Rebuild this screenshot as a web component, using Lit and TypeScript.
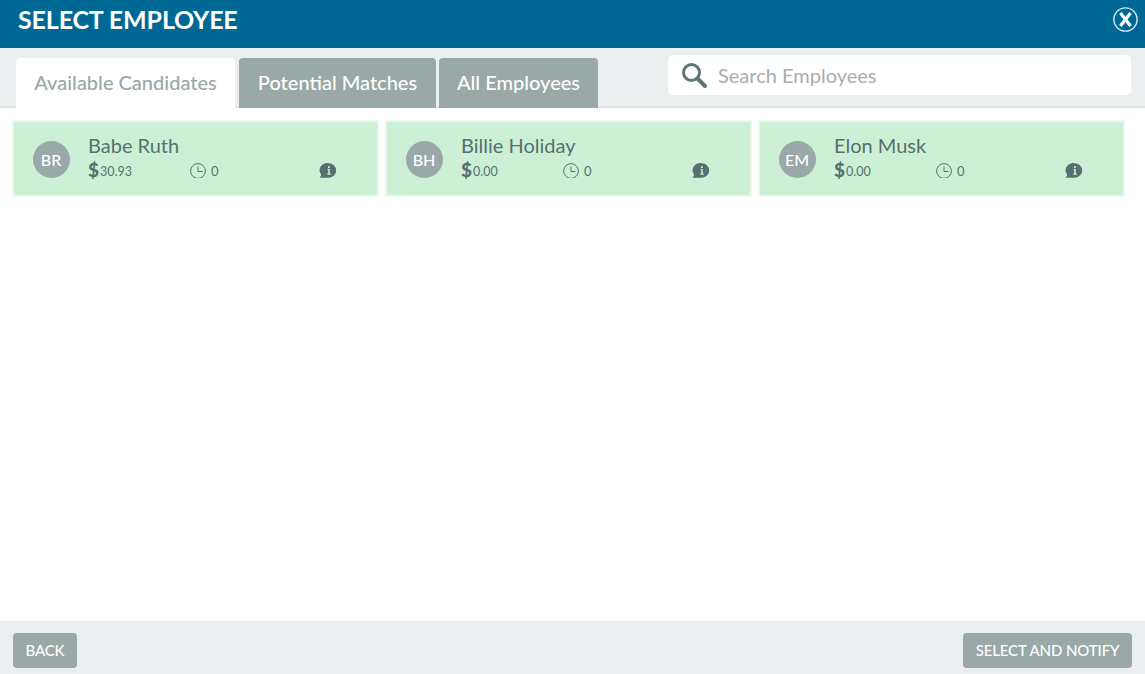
import { LitElement, html, css, svg } from "lit";
import { customElement } from "lit/decorators.js";

const people = [
  { i: "BR", n: "Babe Ruth", p: "30.93" },
  { i: "BH", n: "Billie Holiday", p: "0.00" },
  { i: "EM", n: "Elon Musk", p: "0.00" },
];

@customElement("app-root")
export class AppRoot extends LitElement {
  static styles = css`
    :host { display: flex; flex-direction: column; width: 1145px; height: 674px; overflow: hidden; background: #fff; font-family: Lato, "Open Sans", sans-serif; color: #56706f; }
    .head { height: 48px; flex: none; background: #006894; display: flex; align-items: center; justify-content: space-between; padding: 0 7px 0 18px; box-sizing: border-box; }
    h1 { margin: 0 0 10px; font-size: 25px; line-height: 30px; font-weight: 700; color: #fff; letter-spacing: -0.15px; }
    .close { width: 25px; height: 25px; display: block; margin-bottom: 9px; }
    .tabs { height: 60px; flex: none; box-sizing: border-box; background: #ebeff0; border-bottom: 2px solid #dfe3e4; display: flex; align-items: flex-start; padding-left: 16px; }
    .tab { height: 50px; margin-top: 10px; margin-right: 3px; box-sizing: border-box; border-radius: 4px 4px 0 0; background: #9aa8a7; color: #fff; font-size: 20px; font-weight: 500; display: flex; align-items: center; justify-content: center; padding-bottom: 2px; }
    .tab.on { background: #fff; color: #9aa8a7; position: relative; height: 51px; padding-bottom: 4px; margin-right: 4px; }
    .t1 { width: 219px; } .t2 { width: 197px; } .t3 { width: 159px; }
    .search { width: 463px; height: 40px; margin: 7px 14px 0 auto; background: #fff; border-radius: 5px; display: flex; align-items: center; box-sizing: border-box; padding-left: 13px; gap: 11px; color: #a5aeae; font-size: 20px; }
    .search svg { width: 26px; height: 26px; }
    .body { flex: 1; padding: 12px 20px 0 12px; display: grid; grid-template-columns: repeat(3, 367px); gap: 6px; align-content: start; }
    .card { height: 77px; box-sizing: border-box; background: #ccf0d5; border: 2px solid #edf6f0; display: flex; padding: 19px 0 0 18.5px; }
    .av { width: 37px; height: 37px; border-radius: 50%; background: #9aa8a7; color: #fff; font-size: 16px; font-weight: 500; display: flex; align-items: center; justify-content: center; flex: none; }
    .info { margin-left: 18.5px; margin-top: -8px; }
    .name { font-size: 20px; line-height: 24px; color: #56706f; }
    .meta { display: flex; align-items: center; height: 20px; margin-top: 3px; font-size: 13px; }
    .m1 { width: 102px; display: flex; align-items: center; gap: 1px; }
    .price { font-size: 12.5px; margin-top: 2px; }
    .d { font-size: 19px; font-weight: 900; line-height: 20px; }
    .m2 { width: 129px; display: flex; align-items: center; gap: 5px; }
    .m2 svg { width: 16px; height: 15px; display: block; }
    .m2 span { margin-top: 2px; }
    .bub { width: 18px; height: 15px; display: block; }
    .foot { height: 53px; flex: none; box-sizing: border-box; background: #ebeff0; display: flex; justify-content: space-between; padding: 12px 13px 0 13px; }
    .btn { height: 35px; box-sizing: border-box; border-radius: 4px; background: #9aa8a7; color: #fff; font-size: 15px; font-weight: 500; letter-spacing: -0.12px; display: flex; align-items: center; justify-content: center; padding-bottom: 2px; }
    .back { width: 64px; } .sel { width: 169px; }
  `;

  render() {
    return html`
      <div class="head">
        <h1>SELECT EMPLOYEE</h1>
        <svg class="close" viewBox="0 0 25 25" fill="none">
          <circle cx="12.5" cy="12.5" r="11.6" stroke="#dbe8ee" stroke-width="1.4"/>
          <path d="M7.4 6 L17.6 19 M17.6 6 L7.4 19" stroke="#fff" stroke-width="3.2"/>
        </svg>
      </div>
      <div class="tabs">
        <div class="tab on t1">Available Candidates</div>
        <div class="tab t2">Potential Matches</div>
        <div class="tab t3">All Employees</div>
        <div class="search">
          <svg viewBox="0 0 26 26" fill="none" stroke="#5d7776">
            <circle cx="10.5" cy="10.5" r="8" stroke-width="3"/>
            <path d="M16.5 16.5 L24 24" stroke-width="4" stroke-linecap="round"/>
          </svg>
          <span>Search Employees</span>
        </div>
      </div>
      <div class="body">
        ${people.map((p) => html`
          <div class="card">
            <div class="av">${p.i}</div>
            <div class="info">
              <div class="name">${p.n}</div>
              <div class="meta">
                <div class="m1"><span class="d">$</span><span class="price">${p.p}</span></div>
                <div class="m2">
                  <svg viewBox="0 0 16 15" fill="none" stroke="#56706f" stroke-width="1"><circle cx="8" cy="8" r="7.4"/><path d="M8 3.5 V8.5 H12.5"/></svg>
                  <span>0</span>
                </div>
                <svg class="bub" viewBox="0 0 18 15">
                  ${svg`<path fill="#56706f" d="M10 .3a7.2 7.2 0 1 1 0 14.4H.4c1-.8 1.6-1.9 1.7-3.1A7.5 7.2 0 0 1 10 .3z"/>
                  <path fill="#ccf0d5" d="M9 3.2h1.8v1.7H9zM8.6 6h2.2v4.6h.9v1.1H8.3v-1.1h.9V7h-.6z"/>`}
                </svg>
              </div>
            </div>
          </div>`)}
      </div>
      <div class="foot">
        <div class="btn back">BACK</div>
        <div class="btn sel">SELECT AND NOTIFY</div>
      </div>
    `;
  }
}
